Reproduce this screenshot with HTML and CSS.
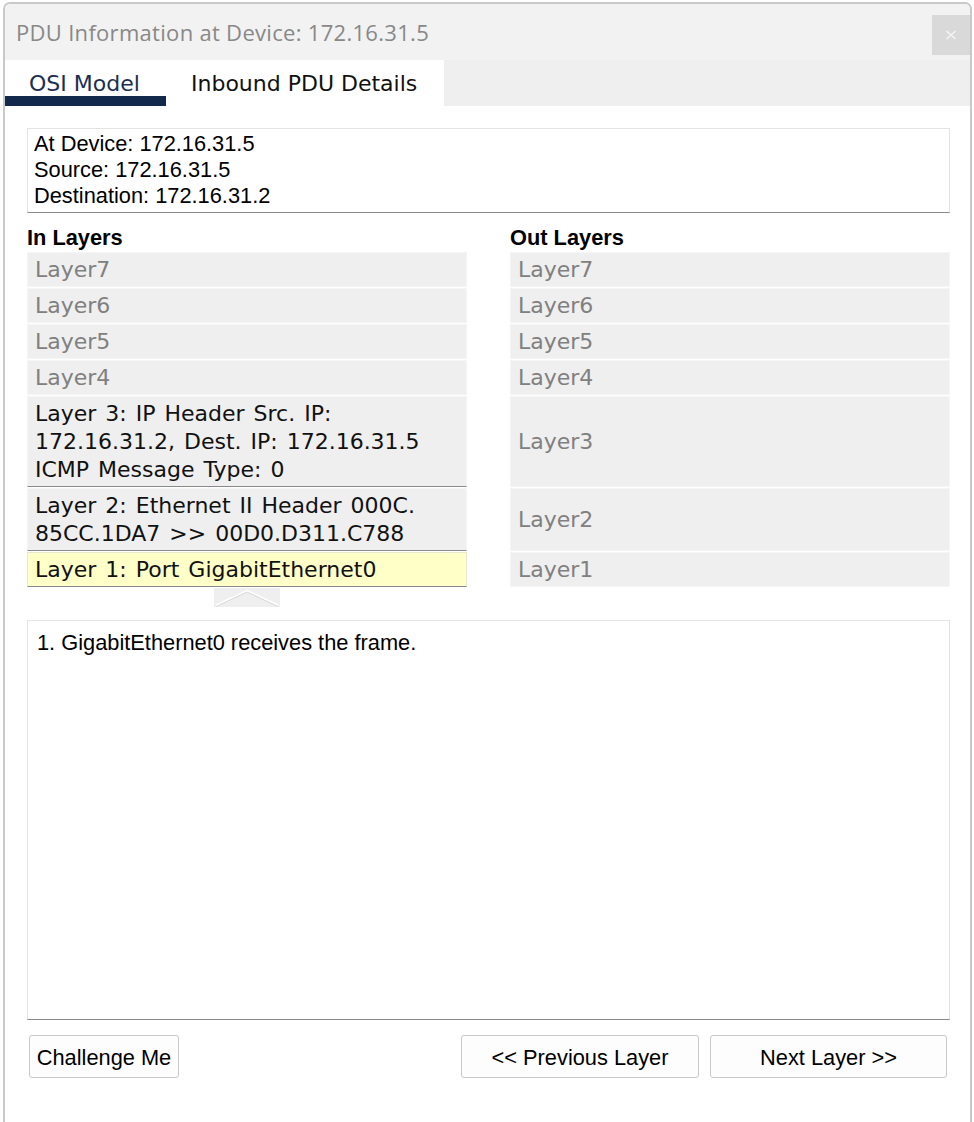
FILE: index.html
```html
<!DOCTYPE html>
<html lang="en">
<head>
<meta charset="utf-8">
<title>PDU Information at Device: 172.16.31.5</title>
<link rel="stylesheet" href="styles.css">
</head>
<body>
<div class="dialog">
  <div class="titlebar">
    <div class="title">PDU Information at Device: 172.16.31.5</div>
    <div class="close">
      <svg width="12" height="10" viewBox="0 0 12 10"><path d="M1.5 1 L10.5 9 M10.5 1 L1.5 9" stroke="#f4f4f4" stroke-width="1.6" fill="none"/></svg>
    </div>
  </div>
  <div class="tabbar">
    <div class="tab tab-active">OSI Model</div>
    <div class="tab tab-second">Inbound PDU Details</div>
  </div>
  <div class="content">
    <div class="info">At Device: 172.16.31.5<br>Source: 172.16.31.5<br>Destination: 172.16.31.2</div>
    <div class="layers">
      <div class="head">In Layers</div>
      <div class="head">Out Layers</div>
      <div class="layer">Layer7</div>
      <div class="layer">Layer7</div>
      <div class="layer">Layer6</div>
      <div class="layer">Layer6</div>
      <div class="layer">Layer5</div>
      <div class="layer">Layer5</div>
      <div class="layer">Layer4</div>
      <div class="layer">Layer4</div>
      <div class="layer layer-on">Layer 3: IP Header Src. IP:<br>172.16.31.2, Dest. IP: 172.16.31.5<br>ICMP Message Type: 0</div>
      <div class="layer">Layer3</div>
      <div class="layer layer-on">Layer 2: Ethernet II Header 000C.<br>85CC.1DA7 &gt;&gt; 00D0.D311.C788</div>
      <div class="layer">Layer2</div>
      <div class="layer layer-on layer-current">Layer 1: Port GigabitEthernet0</div>
      <div class="layer">Layer1</div>
      <div class="arrow">
        <svg width="66" height="19" viewBox="0 0 66 19">
          <rect width="66" height="19" fill="#efefef"/>
          <polyline points="2,18.5 33,4 64,18.5" fill="none" stroke="#d6d6d6" stroke-width="1"/>
          <polyline points="2,17 33,2.5 64,17" fill="none" stroke="#ffffff" stroke-width="1.4"/>
        </svg>
      </div>
    </div>
    <div class="detail">1. GigabitEthernet0 receives the frame.</div>
    <div class="buttons">
      <button class="btn btn-challenge">Challenge Me</button>
      <div class="spacer"></div>
      <button class="btn btn-nav">&lt;&lt; Previous Layer</button>
      <button class="btn btn-nav btn-next">Next Layer &gt;&gt;</button>
    </div>
  </div>
</div>
</body>
</html>
```
FILE: styles.css
```css
html, body {
  margin: 0;
  padding: 0;
  background: #ffffff;
  overflow: hidden;
}

body {
  padding: 2px 0 0 3px;
  font-family: "Liberation Sans", Arial, sans-serif;
}

.dialog {
  width: 969px;
  height: 1140px;
  box-sizing: border-box;
  border: 2px solid #c9c9c9;
  border-radius: 7px 7px 0 0;
  background: #ffffff;
  overflow: hidden;
  display: flex;
  flex-direction: column;
}

.titlebar {
  height: 56px;
  background: #f2f2f2;
  display: flex;
  align-items: center;
}

.title {
  flex: 1;
  padding-left: 11px;
  font-family: "Open Sans", "Noto Sans", sans-serif;
  font-size: 22px;
  letter-spacing: 0.3px;
  color: #888888;
}

.close {
  align-self: flex-start;
  margin-top: 11px;
  width: 38px;
  height: 40px;
  background: #d9d9d9;
  display: flex;
  align-items: center;
  justify-content: center;
}

.tabbar {
  height: 46px;
  background: #efefef;
  display: flex;
}

.tab {
  box-sizing: border-box;
  height: 46px;
  padding-top: 10px;
  background: #ffffff;
  font-family: "DejaVu Sans", Verdana, sans-serif;
  font-size: 22px;
  line-height: 28px;
  color: #111111;
}

.tab-active {
  width: 161px;
  padding-left: 24px;
  color: #1b2f52;
  box-shadow: inset 0 -10px 0 #13294b;
}

.tab-second {
  width: 278px;
  padding-left: 25px;
}

.content {
  padding: 22px 20px 0 22px;
  display: flex;
  flex-direction: column;
}

.info {
  border: 1px solid #e4e4e4;
  border-bottom-color: #8a8a8a;
  padding: 2px 6px 3px;
  font-size: 21.8px;
  line-height: 26px;
  color: #000000;
}

.layers {
  display: grid;
  grid-template-columns: 440px 440px;
  column-gap: 43px;
  row-gap: 1px;
}

.head {
  padding: 13px 0 1px;
  font-weight: bold;
  font-size: 21.8px;
  line-height: 24px;
  color: #000000;
}

.layer {
  display: flex;
  align-items: center;
  border: 1px solid #f5f5f5;
  background: #efefef;
  padding: 3px 7px 2px;
  font-family: "DejaVu Sans", Verdana, sans-serif;
  font-size: 22px;
  line-height: 28px;
  word-spacing: 2px;
  color: #808080;
}

.layer-on {
  align-items: flex-start;
  color: #111111;
  border-bottom-color: #8a8a8a;
}

.layer-current {
  background: #ffffc8;
  border-color: #e8e8d0;
  border-bottom-color: #8a8a8a;
}

.arrow {
  grid-column: 1;
  justify-self: center;
  height: 19px;
}

.arrow svg {
  display: block;
}

.detail {
  margin-top: 13px;
  box-sizing: border-box;
  height: 400px;
  border: 1px solid #e4e4e4;
  border-bottom-color: #8a8a8a;
  padding: 9px 9px;
  font-size: 21.8px;
  line-height: 26px;
  color: #000000;
}

.buttons {
  margin: 15px 3px 0 2px;
  display: flex;
  gap: 11px;
}

.spacer {
  flex: 1;
}

.btn {
  height: 43px;
  box-sizing: border-box;
  border: 1px solid #c9c9c9;
  border-radius: 3px;
  background: #fdfdfd;
  font-family: "Liberation Sans", Arial, sans-serif;
  font-size: 21.8px;
  color: #000000;
  padding: 2px 0 0;
}

.btn-challenge {
  width: 150px;
}

.btn-nav {
  width: 238px;
}

.btn-next {
  width: 237px;
}
```
